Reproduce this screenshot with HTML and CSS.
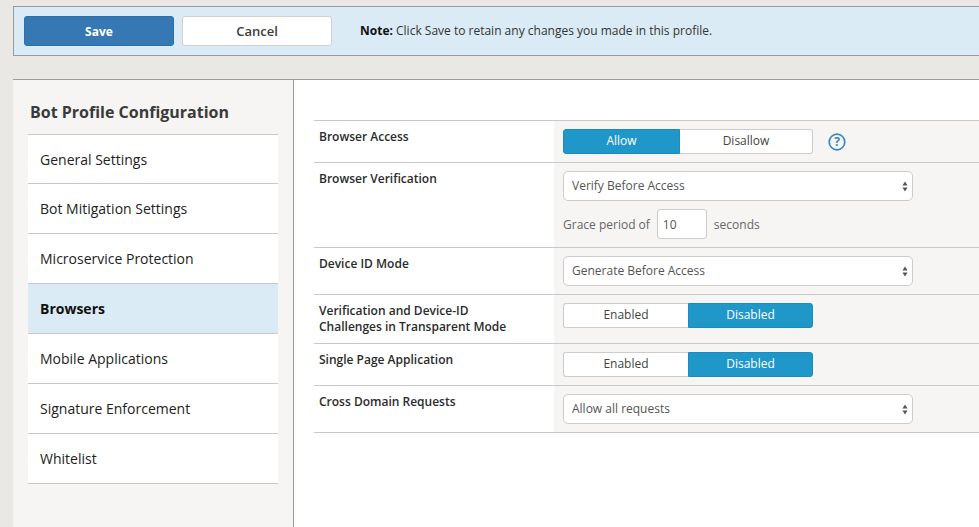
FILE: index.html
```html
<!DOCTYPE html>
<html lang="en">
<head>
<meta charset="utf-8">
<title>Bot Profile Configuration</title>
<link rel="stylesheet" href="styles.css">
</head>
<body>
<div class="page">
  <div class="savebar">
    <button class="btn btn-save">Save</button>
    <button class="btn btn-cancel">Cancel</button>
    <p class="note"><b>Note:</b> Click Save to retain any changes you made in this profile.</p>
  </div>
  <div class="panel">
    <aside class="side">
      <h2 class="side-title">Bot Profile Configuration</h2>
      <ul class="menu">
        <li class="menu-item first">General Settings</li>
        <li class="menu-item">Bot Mitigation Settings</li>
        <li class="menu-item">Microservice Protection</li>
        <li class="menu-item active">Browsers</li>
        <li class="menu-item">Mobile Applications</li>
        <li class="menu-item">Signature Enforcement</li>
        <li class="menu-item">Whitelist</li>
      </ul>
    </aside>
    <main class="content">
      <div class="form">
        <div class="row">
          <div class="label">Browser Access</div>
          <div class="value h-a">
            <div class="toggle t-allow">
              <span class="opt on">Allow</span>
              <span class="opt">Disallow</span>
            </div>
            <svg class="help" width="18" height="18" viewBox="0 0 18 18" aria-hidden="true">
              <circle cx="9" cy="9" r="7.8" fill="none" stroke="#3b86c6" stroke-width="1.7"/>
              <text x="9" y="13.2" text-anchor="middle" class="help-q">?</text>
            </svg>
          </div>
        </div>
        <div class="row">
          <div class="label">Browser Verification</div>
          <div class="value stack">
            <div class="selectbox">
              <select class="select"><option>Verify Before Access</option></select>
              <svg class="caret" width="6" height="11" viewBox="0 0 7 11" preserveAspectRatio="none" aria-hidden="true"><path d="M3.5 0.5 6.5 4.5H.5zM.5 6.5H6.5L3.5 10.5z"/></svg>
            </div>
            <div class="grace">
              <span>Grace period of</span>
              <input class="num" type="text" value="10">
              <span>seconds</span>
            </div>
          </div>
        </div>
        <div class="row">
          <div class="label">Device ID Mode</div>
          <div class="value">
            <div class="selectbox">
              <select class="select"><option>Generate Before Access</option></select>
              <svg class="caret" width="6" height="11" viewBox="0 0 7 11" preserveAspectRatio="none" aria-hidden="true"><path d="M3.5 0.5 6.5 4.5H.5zM.5 6.5H6.5L3.5 10.5z"/></svg>
            </div>
          </div>
        </div>
        <div class="row">
          <div class="label">Verification and Device-ID<br>Challenges in Transparent Mode</div>
          <div class="value">
            <div class="toggle t-enable">
              <span class="opt">Enabled</span>
              <span class="opt on">Disabled</span>
            </div>
          </div>
        </div>
        <div class="row">
          <div class="label">Single Page Application</div>
          <div class="value">
            <div class="toggle t-enable">
              <span class="opt">Enabled</span>
              <span class="opt on">Disabled</span>
            </div>
          </div>
        </div>
        <div class="row">
          <div class="label">Cross Domain Requests</div>
          <div class="value">
            <div class="selectbox">
              <select class="select"><option>Allow all requests</option></select>
              <svg class="caret" width="6" height="11" viewBox="0 0 7 11" preserveAspectRatio="none" aria-hidden="true"><path d="M3.5 0.5 6.5 4.5H.5zM.5 6.5H6.5L3.5 10.5z"/></svg>
            </div>
          </div>
        </div>
      </div>
    </main>
  </div>
</div>
</body>
</html>
```
FILE: styles.css
```css
* { box-sizing: border-box; }
html, body { margin: 0; height: 100%; overflow: hidden; }
body {
  background: #e9e8e4;
  font-family: "Open Sans", "Noto Sans", sans-serif;
  color: #333;
}
.page { padding: 6px 0 0 13px; height: 100%; display: flex; flex-direction: column; }

.savebar {
  height: 50px;
  display: flex;
  align-items: center;
  padding: 0 0 0 10px;
  background: #daebf5;
  border: 1px solid #9b9b9b;
  border-right: 0;
}
.btn {
  width: 150px;
  height: 30px;
  border-radius: 3px;
  font: 600 13px "Open Sans", sans-serif;
  padding: 0;
}
.btn-save { background: #3678b3; border: 1px solid #2f6ea6; color: #fff; font-weight: 700; font-size: 12px; }
.btn-cancel { margin-left: 8px; background: #fff; border: 1px solid #d0d0d0; color: #3c3c3c; }
.note { margin: 0 0 2px 28px; font-size: 12px; color: #333; }
.note b { color: #111; }

.panel {
  margin-top: 23px;
  flex: 1;
  display: flex;
  background: #fff;
  border-top: 1px solid #9b9b9b;
}
.side {
  width: 281px;
  flex: none;
  background: #f6f5f3;
  border-right: 1px solid #9b9b9b;
  padding: 0 15px;
}
.side-title {
  margin: 0;
  padding: 21px 0 0 2px;
  height: 54px;
  font-size: 16px;
  line-height: 22px;
  font-weight: 700;
  color: #3a3a3a;
}
.menu { list-style: none; margin: 0; padding: 0; border-top: 1px solid #c9c9c9; }
.menu-item {
  height: 50px;
  display: flex;
  align-items: center;
  padding: 0 0 1px 12px;
  background: #fff;
  border-bottom: 1px solid #c9c9c9;
  font-size: 14px;
  color: #222;
}
.menu-item.first { height: 49px; padding-bottom: 0; }
.menu-item.active { background: #daebf5; font-weight: 700; color: #111; }

.content { flex: 1; padding: 40px 0 0 20px; min-width: 0; }
.form { border-top: 1px solid #c9c9c9; }
.row { display: flex; border-bottom: 1px solid #c9c9c9; }
.label {
  width: 240px;
  flex: none;
  padding: 8px 5px;
  font-size: 12px;
  font-weight: 600;
  line-height: 16px;
  color: #2b2b2b;
}
.value {
  flex: 1;
  background: #f6f5f3;
  padding: 8px 9px;
  display: flex;
  align-items: flex-start;
  font-size: 12px;
}
.value.stack { flex-direction: column; }
.h-a { height: 41px; }
.toggle { width: 250px; height: 25px; display: flex; }
.opt {
  display: flex;
  align-items: center;
  justify-content: center;
  padding-bottom: 2px;
  color: #444;
  background: #fff;
  border: 1px solid #ccc;
}
.opt:first-child { border-radius: 3px 0 0 3px; }
.opt:last-child { flex: 1; border-radius: 0 3px 3px 0; }
.opt.on { background: #1f97c9; border-color: #1c8cbb; color: #fff; }
.t-allow .opt:first-child { width: 117px; }
.t-allow .opt:last-child { border-left: 0; }
.t-enable .opt:first-child { width: 125px; border-right: 0; }
.help { margin: 4px 0 0 15px; flex: none; }
.help-q { font: 700 12px "Open Sans", sans-serif; fill: #3b86c6; }

.selectbox { position: relative; width: 350px; height: 30px; }
.select {
  appearance: none;
  -webkit-appearance: none;
  width: 100%;
  height: 100%;
  padding: 0 8px 2px;
  background: #fff;
  border: 1px solid #ccc;
  border-radius: 5px;
  font: 12px "Open Sans", sans-serif;
  color: #555;
}
.caret { position: absolute; right: 5px; top: 10px; fill: #555; }
.grace { margin-top: 8px; display: flex; align-items: center; gap: 7px; color: #666; }
.num {
  width: 50px;
  height: 30px;
  padding: 0 5px;
  border: 1px solid #ccc;
  border-radius: 3px;
  font: 12px "Open Sans", sans-serif;
  color: #555;
  background: #fff;
}
```
